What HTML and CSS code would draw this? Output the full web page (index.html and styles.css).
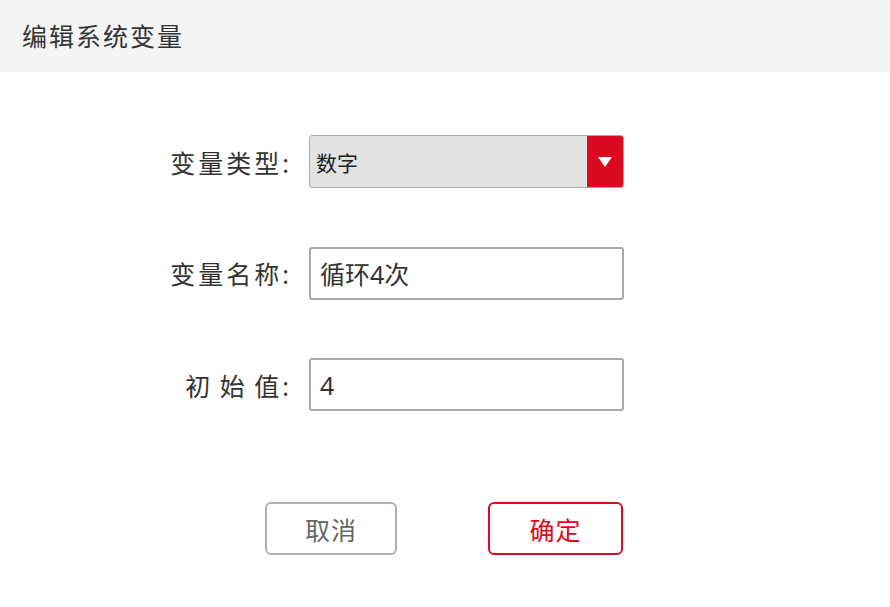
FILE: index.html
```html
<!DOCTYPE html>
<html lang="zh-CN">
<head>
<meta charset="utf-8">
<title>编辑系统变量</title>
<link rel="stylesheet" href="styles.css">
</head>
<body>
<div class="dialog">
  <div class="header">编辑系统变量</div>
  <div class="form">
    <div class="row">
      <div class="label">变量类型:</div>
      <div class="select">
        <span class="select-text">数字</span>
        <span class="select-arrow"><svg width="14" height="10" viewBox="0 0 14 10"><path d="M0 0 H14 L7 10 Z" fill="#fff"/></svg></span>
      </div>
    </div>
    <div class="row">
      <div class="label">变量名称:</div>
      <div class="input">循环4次</div>
    </div>
    <div class="row">
      <div class="label label-spaced">初 始 值:</div>
      <div class="input">4</div>
    </div>
  </div>
  <div class="actions">
    <button class="btn btn-cancel">取消</button>
    <button class="btn btn-ok">确定</button>
  </div>
</div>
</body>
</html>
```

FILE: styles.css
```css
* { box-sizing: border-box; }
html, body {
  margin: 0;
  padding: 0;
  background: #ffffff;
  font-family: "Noto Sans", "Noto Sans CJK SC", sans-serif;
  color: #333;
}
.dialog {
  width: 890px;
  height: 607px;
  display: flex;
  flex-direction: column;
}
.header {
  height: 72px;
  background: #f4f4f4;
  padding-left: 22px;
  display: flex;
  align-items: center;
  font-size: 25px;
  letter-spacing: 2px;
  color: #333;
  padding-bottom: 2px;
}
.form {
  padding-top: 63px;
  padding-left: 150px;
  display: flex;
  flex-direction: column;
  gap: 58.5px;
}
.row {
  display: flex;
  align-items: center;
  height: 53px;
}
.label {
  width: 142px;
  text-align: right;
  font-size: 25px;
  letter-spacing: 3px;
  color: #333;
  margin-right: 17px;
}
.label-spaced {
  word-spacing: -3px;
}
.select {
  width: 315px;
  height: 53px;
  background: #e2e2e2;
  border: 1px solid #a9a9a9;
  border-radius: 3px;
  display: flex;
  overflow: hidden;
}
.select-text {
  flex: 1;
  display: flex;
  align-items: center;
  padding-left: 6px;
  font-size: 21px;
  color: #222;
}
.select-arrow {
  width: 36px;
  background: #dc0a20;
  display: flex;
  align-items: center;
  justify-content: center;
}
.input {
  width: 315px;
  height: 53px;
  border: 2px solid #a9a9a9;
  border-radius: 3px;
  display: flex;
  align-items: center;
  padding-left: 9px;
  font-size: 25px;
  color: #333;
}
.actions {
  margin-top: 91px;
  padding-left: 265px;
  display: flex;
  gap: 91px;
}
.btn {
  height: 53px;
  border-radius: 6px;
  background: #fff;
  font-family: "Noto Sans", "Noto Sans CJK SC", sans-serif;
  font-size: 25px;
  letter-spacing: 1px;
  padding: 0;
}
.btn-cancel {
  width: 132px;
  border: 2px solid #b0b0b0;
  color: #666;
}
.btn-ok {
  width: 135px;
  border: 2px solid #dc0a20;
  color: #dc0a20;
}
```
